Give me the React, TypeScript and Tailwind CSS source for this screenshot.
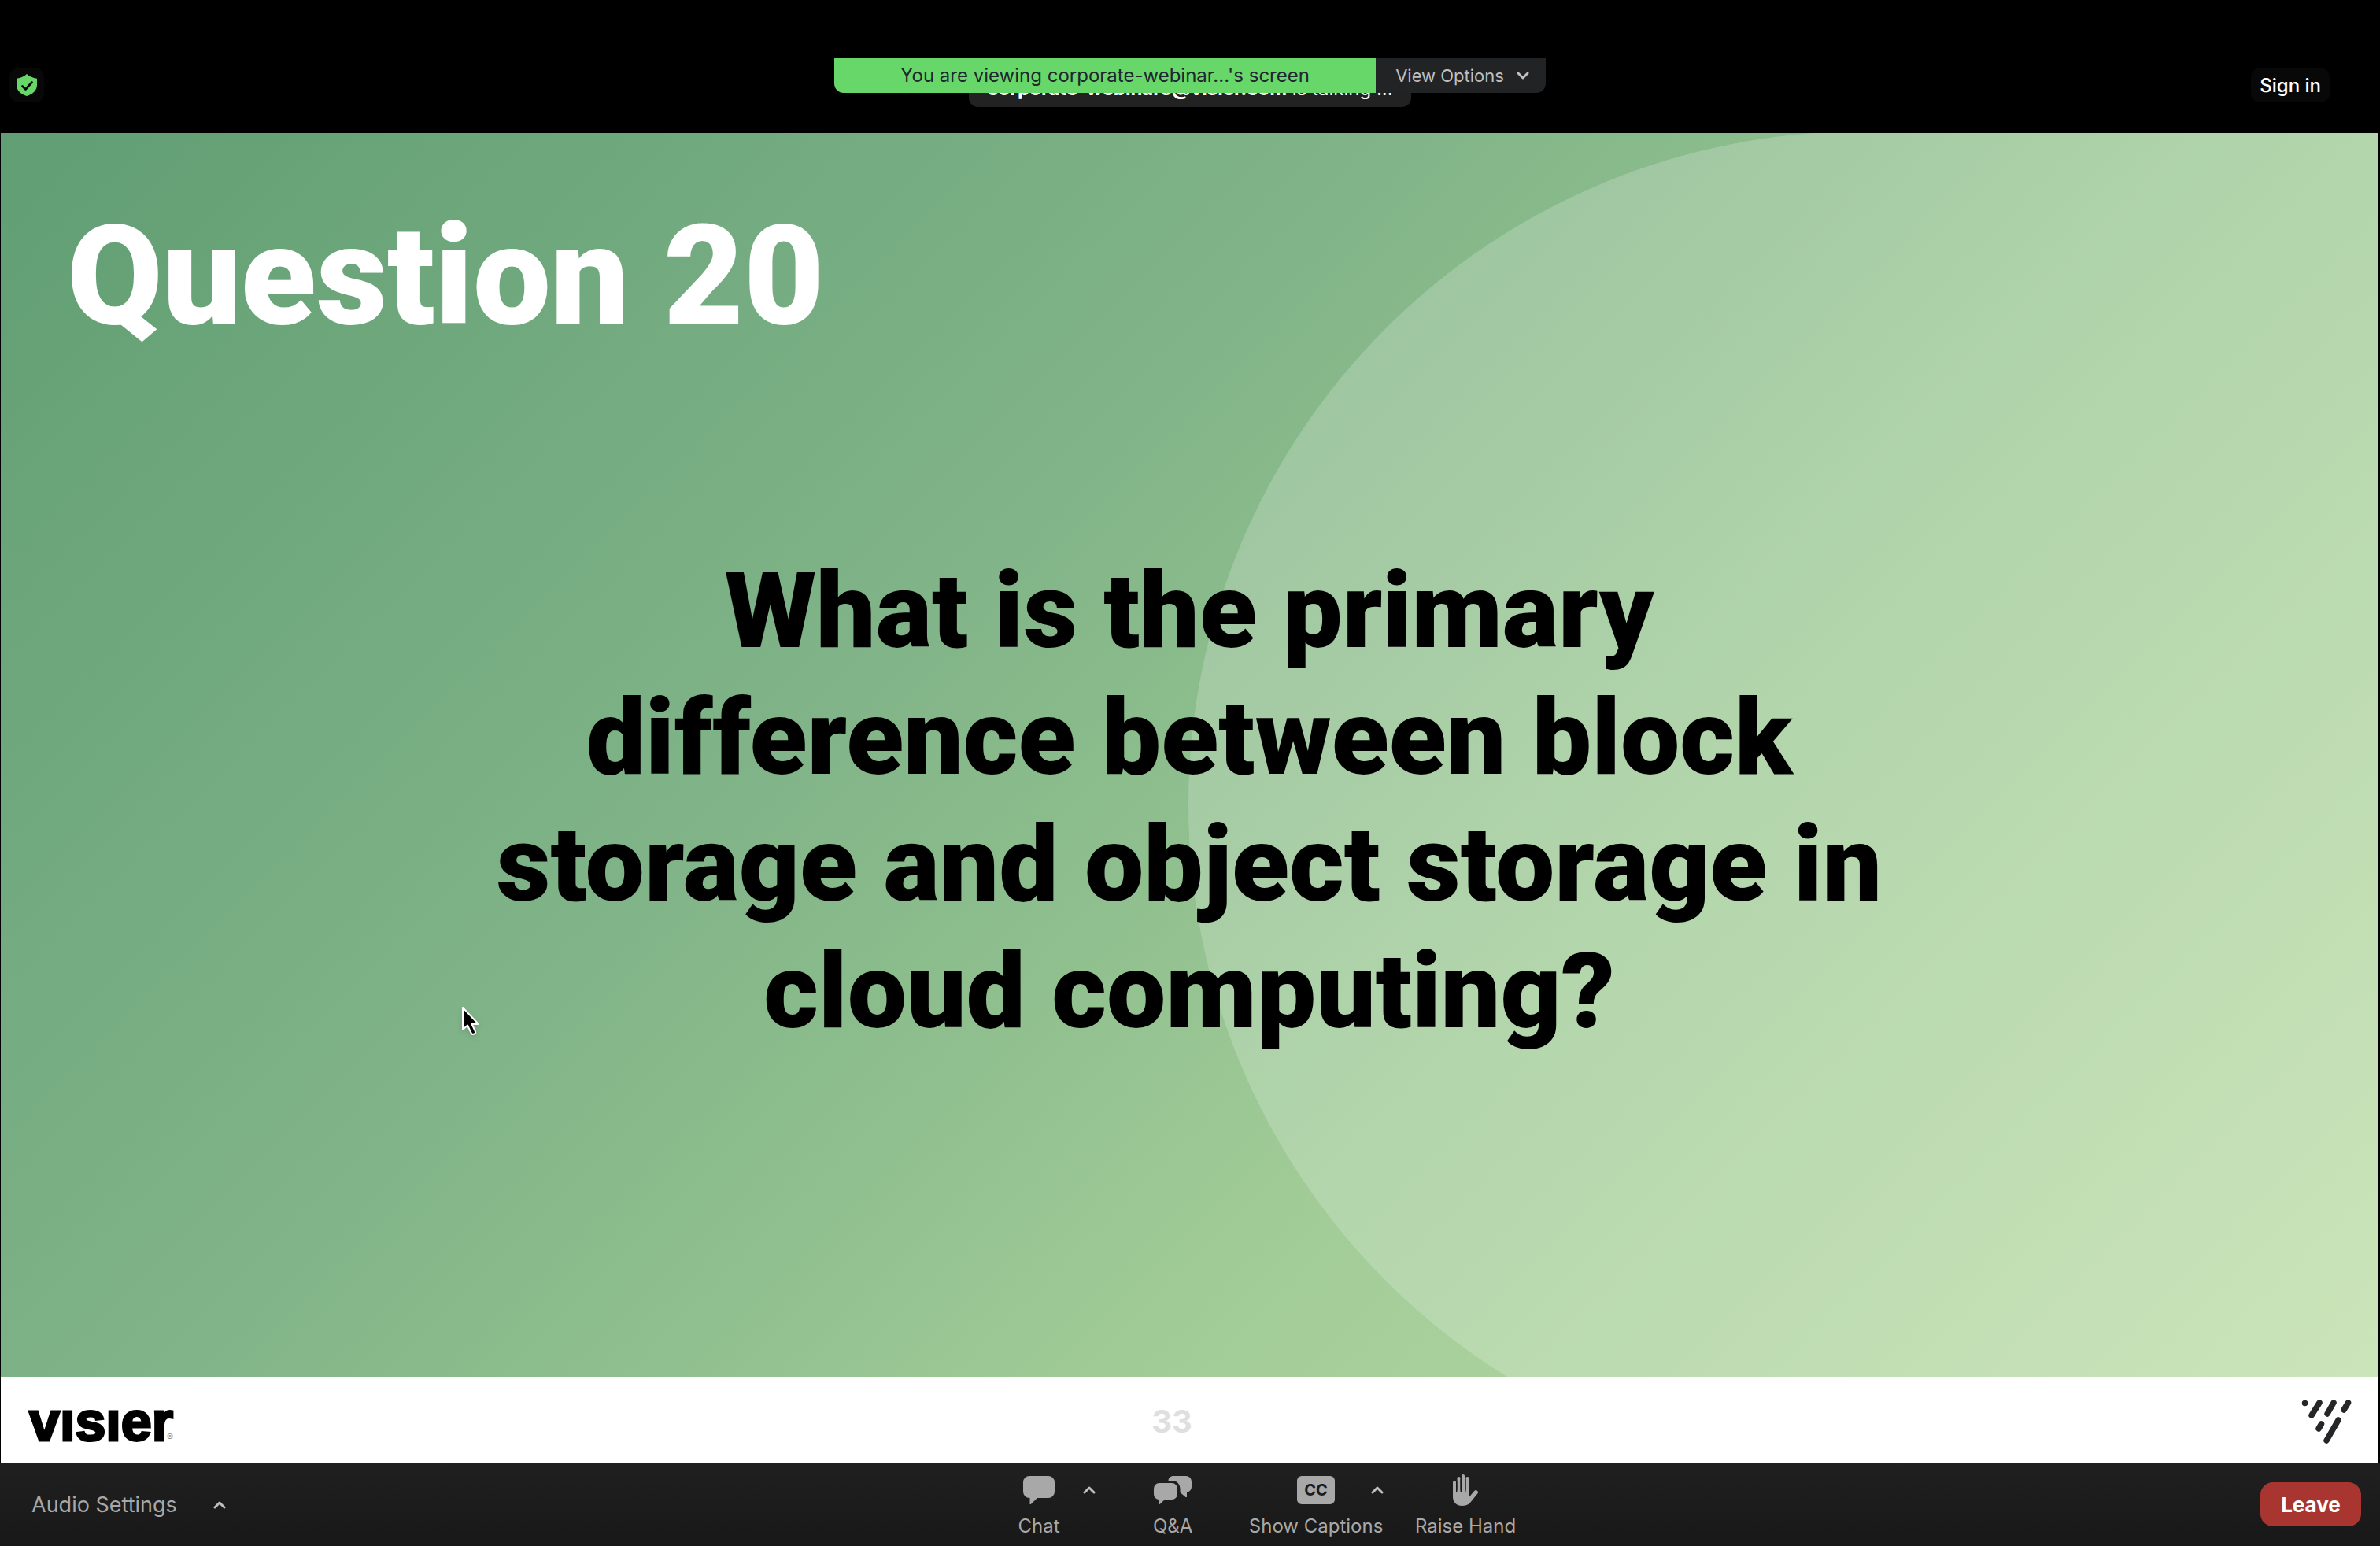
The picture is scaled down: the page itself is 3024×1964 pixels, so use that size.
import React from "react";

function Chevron({ up = false, className }: { up?: boolean; className: string }) {
  return (
    <svg viewBox="0 0 16 10" fill="none" stroke="currentColor" strokeWidth="3" strokeLinecap="round" strokeLinejoin="round" className={className} aria-hidden="true">
      <path d={up ? "M2 8 8 2l6 6" : "M2 2l6 6 6-6"} />
    </svg>
  );
}

function ShieldIcon() {
  return (
    <svg viewBox="0 0 26 28" className="h-7 w-[26px]" aria-hidden="true">
      <path d="M13 0c3.500 3.200 7.500 5 13 5.800V14c0 6.500-5 11.500-13 14C5 25.500 0 20.500 0 14V5.800C5.500 5 9.500 3.200 13 0z" fill="#68d76a" />
      <path d="M7.500 15.500l4 4 8-9" fill="none" stroke="#080a08" strokeWidth="2.800" strokeLinecap="round" strokeLinejoin="round" />
    </svg>
  );
}

function ChatIcon() {
  return (
    <svg viewBox="0 0 40 36" className="h-9 w-10" fill="#a8a8a8" aria-hidden="true">
      <path d="M8 0h24a8 8 0 0 1 8 8v12a8 8 0 0 1-8 8H18l-8.200 8H8.500v-8H8a8 8 0 0 1-8-8V8a8 8 0 0 1 8-8z" />
    </svg>
  );
}

function QaIcon() {
  return (
    <svg viewBox="0 0 48 36" className="h-9 w-12" fill="#a8a8a8" aria-hidden="true">
      <path d="M25 0h16a7 7 0 0 1 7 7v7a7 7 0 0 1-6 6.900V27h-1.500l-7-6V17c0-6.500-4-11-10-11h-5c0-3.500 3-6 6.500-6z" />
      <path d="M7 9h16a7 7 0 0 1 7 7v7a7 7 0 0 1-7 7h-9l-6.500 6H6v-6a7 7 0 0 1-6-7v-7a7 7 0 0 1 7-7z" />
    </svg>
  );
}

function HandIcon() {
  return (
    <svg viewBox="0 0 32 40" className="h-10 w-8" aria-hidden="true">
      <g stroke="#a8a8a8" strokeWidth="4" strokeLinecap="round">
        <path d="M2 10v16M7.500 5v20M13 2v23M18.500 5v20" />
      </g>
      <path d="M0 20h20.500v9l7-8.200a2.700 2.700 0 0 1 4.200 3.200L22 36c-2.200 2.700-6 4-10.500 4C5 40 0 35.500 0 29z" fill="#a8a8a8" />
      <path d="M4.750 8v14M10.250 6v16M15.750 6v16" stroke="#1c1c1c" strokeWidth="1.500" />
    </svg>
  );
}

function SlideMark() {
  return (
    <svg viewBox="0 0 66 58" className="h-[58px] w-[66px]" stroke="#242627" strokeWidth="7.500" strokeLinecap="round" aria-hidden="true">
      <path d="M5.500 5.500h.1M24 5L14 21M42 5L34 19M60.500 5L55 14M26.500 32L23 38M48 27L33 53" />
    </svg>
  );
}

function ToolButton({ label, icon, className }: { label: string; icon: React.ReactNode; className: string }) {
  return (
    <button className={`flex flex-col items-center ${className}`}>
      <span className="flex h-10 items-center">{icon}</span>
      <span className="mt-3 text-[24px] leading-7 whitespace-nowrap">{label}</span>
    </button>
  );
}

function Header() {
  return (
    <header className="relative flex h-[169px] items-start justify-between pt-[86px] pr-16 pl-3">
      <button aria-label="Meeting information" className="flex h-11 w-11 items-center justify-center rounded-xl bg-[#080808]">
        <ShieldIcon />
      </button>
      <div className="absolute top-[86px] left-1/2 flex h-[50px] w-[562px] -translate-x-1/2 items-center justify-center rounded-xl bg-[#222222] pt-1 text-[24px] whitespace-nowrap text-white">
        <p>
          <b className="font-bold">corporate-webinars@visier.com</b> is talking ...
        </p>
      </div>
      <div className="absolute top-[74px] left-1/2 flex h-11 w-[904px] -translate-x-1/2 overflow-hidden rounded-b-xl">
        <p className="flex flex-1 items-center justify-center bg-[#68d76a] text-[24px] whitespace-nowrap text-[#20262e]">
          You are viewing corporate-webinar...&apos;s screen
        </p>
        <button className="flex w-[216px] items-center justify-center gap-4 bg-[#222325] pl-1 text-[22px] whitespace-nowrap text-[#bfbfbf]">
          View Options
          <Chevron className="h-[10px] w-4" />
        </button>
      </div>
      <button className="h-11 rounded-xl bg-[#080808] px-[11px] pt-0.5 text-[24px] font-medium text-white">Sign in</button>
    </header>
  );
}

function Slide() {
  return (
    <main className="mr-[3px] ml-px flex flex-1 flex-col">
      <section className="relative flex flex-1 flex-col overflow-hidden bg-[linear-gradient(135deg,#619e73_0%,#80b388_38%,#8bbc8c_48%,#a0cb97_65%,#bfdea8_100%)] font-[Roboto,sans-serif]">
        <div className="absolute -top-[2px] right-0 left-[1509px] h-[1710px] rounded-l-[855px] bg-white/20" />
        <h1 className="relative mt-[78px] ml-[84px] text-[176px] leading-[208px] font-black text-white">Question 20</h1>
        <p className="relative mx-auto mt-[241px] w-[1800px] text-center text-[134px] leading-[161px] font-black text-black">
          What is the primary difference between block storage and object storage in cloud computing?
        </p>
        <svg viewBox="0 0 24 38" className="absolute top-[1109px] left-[585px] h-[38px] w-6 drop-shadow-md" aria-hidden="true">
          <path d="M2 2v28l6-5.500 5 10.500c2 2 6 0 5-2.500L13.500 23H22z" fill="#000" stroke="#fff" strokeWidth="2" strokeLinejoin="round" />
        </svg>
      </section>
      <footer className="grid h-[109px] grid-cols-3 items-center bg-white pt-1 pr-8 pl-9">
        <div className="flex items-end">
          <span aria-label="Visier" className="font-['Liberation_Sans',sans-serif] text-[70px] leading-[72px] font-bold text-black [-webkit-text-stroke:3px_black]">vısıer</span>
          <span className="mb-2 -ml-2 text-[12px] leading-4 text-[#888888]">®</span>
        </div>
        <span className="pr-12 text-center text-[40px] leading-[48px] font-bold text-[#dfdfe0]">33</span>
        <div className="flex justify-end">
          <SlideMark />
        </div>
      </footer>
    </main>
  );
}

function Toolbar() {
  return (
    <nav aria-label="Meeting controls" className="flex h-[106px] bg-linear-to-b from-[#202020] to-[#181818] text-[#a8a8a8]">
      <div className="flex w-[42%] items-center gap-10 pt-0.5 pl-10">
        <button className="text-[27px] leading-9">Audio Settings</button>
        <button aria-label="Audio options" className="flex h-7 w-7 items-center justify-center text-[#bfbfbf]">
          <Chevron up className="h-[10px] w-4" />
        </button>
      </div>
      <div className="flex items-start pt-[15px]">
        <ToolButton label="Chat" icon={<ChatIcon />} className="w-[100px]" />
        <button aria-label="Chat options" className="flex h-10 w-7 items-center justify-center text-[#bfbfbf]">
          <Chevron up className="h-[10px] w-4" />
        </button>
        <ToolButton label="Q&A" icon={<QaIcon />} className="ml-[42px] w-[100px]" />
        <ToolButton
          label="Show Captions"
          icon={<span className="flex h-9 w-12 items-center justify-center rounded-md bg-[#a8a8a8] text-[20px] font-bold text-[#1c1c1c]">CC</span>}
          className="ml-10 w-[184px]"
        />
        <button aria-label="Caption options" className="-ml-7 flex h-10 w-7 items-center justify-center text-[#bfbfbf]">
          <Chevron up className="h-[10px] w-4" />
        </button>
        <ToolButton label="Raise Hand" icon={<HandIcon />} className="ml-7 w-[140px]" />
      </div>
      <div className="flex flex-1 items-center justify-end pr-6">
        <button className="h-14 w-32 rounded-2xl bg-[#a83530] text-[26px] font-bold text-white">Leave</button>
      </div>
    </nav>
  );
}

export default function App() {
  return (
    <div className="flex min-h-screen flex-col bg-black font-[Inter,sans-serif]">
      <Header />
      <Slide />
      <Toolbar />
    </div>
  );
}
